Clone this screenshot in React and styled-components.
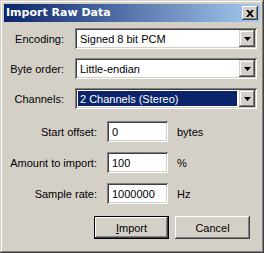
import React from "react";
import styled, { createGlobalStyle } from "styled-components";

const GlobalStyle = createGlobalStyle`
  html, body {
    margin: 0;
    padding: 0;
    background: #d4d0c8;
  }
  body {
    font-family: "Liberation Sans", Arial, sans-serif;
    font-size: 11px;
    color: #000;
  }
`;

const Window = styled.div`
  box-sizing: border-box;
  width: 264px;
  height: 253px;
  padding: 4px;
  background: #d4d0c8;
  box-shadow: inset -1px -1px #404040, inset 1px 1px #d4d0c8,
    inset -2px -2px #808080, inset 2px 2px #fff;
  display: flex;
  flex-direction: column;
`;

const TitleBar = styled.div`
  height: 18px;
  display: flex;
  align-items: center;
  justify-content: space-between;
  padding: 0 2px;
  background: linear-gradient(to right, #0a246a, #a6caf0);
  color: #fff;
  font-family: "DejaVu Sans", Verdana, sans-serif;
  font-weight: bold;
  font-size: 11px;
`;

const TitleText = styled.span`
  line-height: 18px;
`;

const CloseButton = styled.div`
  box-sizing: border-box;
  width: 16px;
  height: 14px;
  display: flex;
  align-items: center;
  justify-content: center;
  background: #d4d0c8;
  box-shadow: inset -1px -1px #404040, inset 1px 1px #fff,
    inset -2px -2px #808080;
`;

const Body = styled.div`
  display: flex;
  flex-direction: column;
  padding-top: 6px;
`;

const ComboRows = styled.div`
  display: flex;
  flex-direction: column;
  gap: 9px;
`;

const InputRows = styled.div`
  display: flex;
  flex-direction: column;
  gap: 10px;
  margin-top: 12px;
`;

const Row = styled.div`
  display: flex;
  align-items: center;
  height: 21px;
`;

const Label = styled.label`
  width: ${(p) => p.$width}px;
  margin-right: ${(p) => p.$gap}px;
  text-align: right;
`;

const Field = styled.div`
  box-sizing: border-box;
  position: relative;
  width: ${(p) => p.$width}px;
  height: 21px;
  padding: 2px;
  background: #fff;
  box-shadow: inset 1px 1px #808080, inset -1px -1px #fff,
    inset 2px 2px #404040, inset -2px -2px #d4d0c8;
  display: flex;
  align-items: stretch;
`;

const FieldText = styled.div`
  flex: 1;
  display: flex;
  align-items: center;
  padding-left: 2px;
  margin: 1px 2px 1px 1px;
  background: ${(p) => (p.$selected ? "#0a246a" : "transparent")};
  color: ${(p) => (p.$selected ? "#fff" : "#000")};
`;

const DropButton = styled.div`
  box-sizing: border-box;
  width: 16px;
  display: flex;
  align-items: center;
  justify-content: center;
  background: #d4d0c8;
  box-shadow: inset -1px -1px #404040, inset 1px 1px #d4d0c8,
    inset -2px -2px #808080, inset 2px 2px #fff;
`;

const Unit = styled.span`
  margin-left: 9px;
`;

const ButtonRow = styled.div`
  display: flex;
  justify-content: flex-end;
  gap: 6px;
  margin-top: 12px;
  padding-right: 10px;
`;

const Button = styled.button`
  box-sizing: border-box;
  width: 75px;
  height: 23px;
  border: none;
  padding: 0;
  font-family: inherit;
  font-size: 11px;
  color: #000;
  background: #d4d0c8;
  box-shadow: ${(p) =>
    p.$default
      ? "inset 0 0 0 1px #000, inset -2px -2px #404040, inset 2px 2px #fff, inset -3px -3px #808080"
      : "inset -1px -1px #404040, inset 1px 1px #fff, inset -2px -2px #808080"};
`;

function Arrow() {
  return (
    <svg width="7" height="4" viewBox="0 0 7 4">
      <path d="M0 0h7L3.5 4z" fill="#000" />
    </svg>
  );
}

function Combo({ value, selected }) {
  return (
    <Field $width={182}>
      <FieldText $selected={selected}>{value}</FieldText>
      <DropButton>
        <Arrow />
      </DropButton>
    </Field>
  );
}

const combos = [
  { label: "Encoding:", value: "Signed 8 bit PCM" },
  { label: "Byte order:", value: "Little-endian" },
  { label: "Channels:", value: "2 Channels (Stereo)", selected: true },
];

const inputs = [
  { label: "Start offset:", value: "0", unit: "bytes" },
  { label: "Amount to import:", value: "100", unit: "%" },
  { label: "Sample rate:", value: "1000000", unit: "Hz" },
];

export default function App() {
  return (
    <>
      <GlobalStyle />
      <Window>
        <TitleBar>
          <TitleText>Import Raw Data</TitleText>
          <CloseButton>
            <svg width="8" height="7" viewBox="0 0 8 7">
              <path d="M0 0h2.2L4 2.1 5.8 0H8L5.2 3.5 8 7H5.8L4 4.9 2.2 7H0l2.8-3.5z" fill="#000" />
            </svg>
          </CloseButton>
        </TitleBar>
        <Body>
          <ComboRows>
            {combos.map((c) => (
              <Row key={c.label}>
                <Label $width={60} $gap={11}>{c.label}</Label>
                <Combo value={c.value} selected={c.selected} />
              </Row>
            ))}
          </ComboRows>
          <InputRows>
            {inputs.map((i) => (
              <Row key={i.label}>
                <Label $width={93} $gap={10}>{i.label}</Label>
                <Field $width={61}>
                  <FieldText>{i.value}</FieldText>
                </Field>
                <Unit>{i.unit}</Unit>
              </Row>
            ))}
          </InputRows>
          <ButtonRow>
            <Button $default>
              <u>I</u>mport
            </Button>
            <Button>Cancel</Button>
          </ButtonRow>
        </Body>
      </Window>
    </>
  );
}
